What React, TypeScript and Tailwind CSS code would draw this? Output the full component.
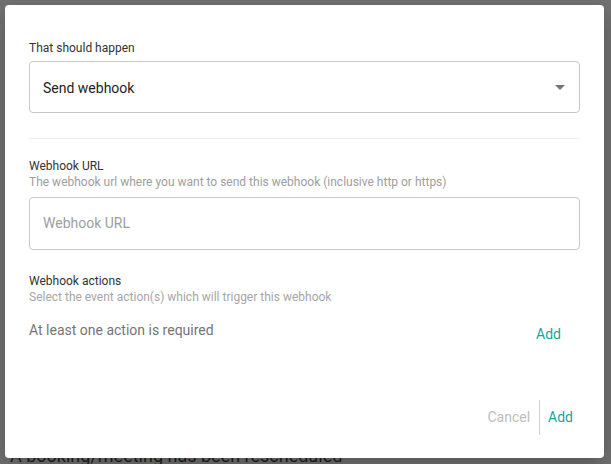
import React from "react";

export default function App() {
  return (
    <div
      className="relative w-[611px] h-[464px] overflow-hidden bg-[#727272]"
      style={{ fontFamily: "Roboto, 'Liberation Sans', sans-serif" }}
    >
      <div className="pt-[444px] pl-[10px] text-[18px] leading-[24px] text-[#1f1f1f] whitespace-nowrap">
        A booking/meeting has been rescheduled
      </div>

      <div className="absolute left-[5px] top-[5px] w-[599px] h-[453px] rounded-[4px] bg-white shadow-[0_8px_24px_rgba(0,0,0,0.25)] flex flex-col px-[24px] pt-[35px]">
        <div className="text-[12px] leading-[16px] text-[#333333]">That should happen</div>
        <div className="mt-[5px] h-[52px] rounded-[4px] border border-[#c8c8c8] flex items-center justify-between pl-[13px] pr-[14px]">
          <span className="text-[14px] leading-[20px] mt-[2px] text-[#222222]">Send webhook</span>
          <svg width="10" height="5" viewBox="0 0 10 5">
            <path d="M0 0 L10 0 L5 5 Z" fill="#757575" />
          </svg>
        </div>

        <div className="mt-[25px] h-px bg-[#eeeeee]" />

        <div className="mt-[19px] text-[12px] leading-[16px] text-[#333333]">Webhook URL</div>
        <div className="text-[12px] leading-[16px] text-[#9e9e9e]">
          The webhook url where you want to send this webhook (inclusive http or https)
        </div>
        <div className="mt-[7px] h-[53px] rounded-[4px] border border-[#c8c8c8] flex items-center pl-[13px]">
          <span className="text-[14px] text-[#9e9e9e]">Webhook URL</span>
        </div>

        <div className="mt-[23px] text-[12px] leading-[16px] text-[#333333]">Webhook actions</div>
        <div className="text-[12px] leading-[16px] text-[#a6a6a6]">
          Select the event action(s) which will trigger this webhook
        </div>
        <div className="mt-[15px] flex items-start justify-between pr-[19px]">
          <span className="text-[14px] leading-[20px] text-[#757575]">At least one action is required</span>
          <span className="mt-[4px] text-[14px] leading-[20px] text-[#1aa39a]">Add</span>
        </div>

        <div className="mt-auto mb-[23px] flex items-center justify-end pr-[7px]">
          <span className="text-[14px] text-[#bdbdbd]">Cancel</span>
          <div className="ml-[9px] mr-[8px] w-px h-[35px] bg-[#d0d0d0]" />
          <span className="text-[14px] text-[#1aa39a]">Add</span>
        </div>
      </div>
    </div>
  );
}
